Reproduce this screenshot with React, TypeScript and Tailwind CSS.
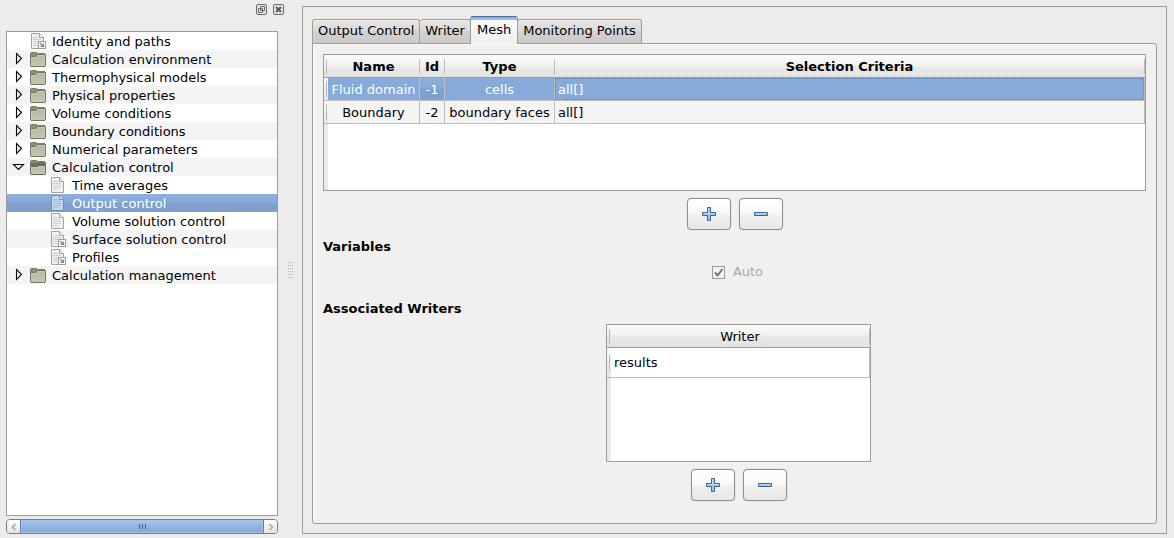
import { useState } from "react";

type IconKind = "page" | "link" | "folder" | "open";

interface Row {
  label: string;
  icon: IconKind;
  child?: boolean;
}

const rows: Row[] = [
  { label: "Identity and paths", icon: "link" },
  { label: "Calculation environment", icon: "folder" },
  { label: "Thermophysical models", icon: "folder" },
  { label: "Physical properties", icon: "folder" },
  { label: "Volume conditions", icon: "folder" },
  { label: "Boundary conditions", icon: "folder" },
  { label: "Numerical parameters", icon: "folder" },
  { label: "Calculation control", icon: "open" },
  { label: "Time averages", icon: "page", child: true },
  { label: "Output control", icon: "page", child: true },
  { label: "Volume solution control", icon: "page", child: true },
  { label: "Surface solution control", icon: "link", child: true },
  { label: "Profiles", icon: "link", child: true },
  { label: "Calculation management", icon: "folder" },
];

function FolderIcon({ open }: { open: boolean }) {
  return (
    <svg width="16" height="16" viewBox="0 0 16 16" className="shrink-0" aria-hidden="true">
      <defs>
        <linearGradient id="folderFill" x1="0" y1="0" x2="0" y2="1">
          <stop offset="0" stopColor="#b4b6a0" />
          <stop offset="1" stopColor="#c6c8b4" />
        </linearGradient>
      </defs>
      <path d="M.5 5V2L1.5 1.5H6.5L7.5 2.5H14.5L15.5 3.5V14.5H.5Z" fill="#8b8d78" stroke="#7b7d6b" />
      {open ? (
        <>
          <path d="M1 4H7L8 3H15V7H1Z" fill="#6d6f5e" />
          <path d="M.5 8.5L1.5 7.5H7.5L8.5 6.5H15.5V14.5L15 15.5H1L.5 14.5Z" fill="url(#folderFill)" stroke="#66685a" />
          <path d="M1.5 14V8.5H8L9 7.5H14.5V14" fill="none" stroke="#c9cbb9" />
        </>
      ) : (
        <>
          <path d="M.5 5.5H5.5L7.5 3.5H15L15.5 4V14.5L15 15.5H1L.5 14.5Z" fill="url(#folderFill)" stroke="#74765f" />
          <path d="M1.5 14V6.5H6L8 4.5H14.5V14" fill="none" stroke="#c9cbb9" />
        </>
      )}
    </svg>
  );
}

function PageIcon({ link, tinted }: { link: boolean; tinted: boolean }) {
  const paper = tinted ? "#c3d6ea" : "#f1f1ef";
  const edge = tinted ? "#6f8fb5" : "#a3a3a0";
  const ink = tinted ? "#a3bbd6" : "#d0d0ce";
  return (
    <svg width="16" height="16" viewBox="0 0 16 16" className="shrink-0" aria-hidden="true">
      <path d="M1.5.5H9.5L13.5 4.5V15.5H1.5Z" fill={paper} stroke={edge} />
      <path d="M9.5.5V4.5H13.5" fill="#ffffff" fillOpacity=".6" stroke={edge} />
      <path d="M3 4.5H8M3 6.5H11M3 8.5H11M3 10.5H11M3 12.5H8" stroke={ink} />
      {link && (
        <>
          <rect x="8.5" y="8.5" width="7" height="7" fill="#fafafa" stroke="#9b9b99" />
          <path d="M10 10L13 13" stroke="#85858a" strokeWidth="1.3" />
          <path d="M14 10V14H10Z" fill="#85858a" />
        </>
      )}
    </svg>
  );
}

function PlusMinus({ plus }: { plus: boolean }) {
  return (
    <svg width="16" height="16" viewBox="0 0 16 16" aria-hidden="true">
      <path
        d={plus ? "M6.5 1.5H9.5V6.5H14.5V9.5H9.5V14.5H6.5V9.5H1.5V6.5H6.5Z" : "M1.5 6.5H14.5V9.5H1.5Z"}
        fill="#a4c0e4"
        stroke="#3465a4"
      />
      <path d={plus ? "M7.5 2.5V7.5H2.5M8.5 7.5H13.5" : "M2.5 7.5H13.5"} fill="none" stroke="#c6d8ee" />
    </svg>
  );
}

function AddRemove({ subject }: { subject: string }) {
  const style =
    "flex h-8 w-11 items-center justify-center rounded border border-[#8e8d8b] bg-[linear-gradient(#ffffff,#f8f8f7_50%,#f1f1f0_50%,#e8e7e6)] shadow-[0_0_1px_#b5b4b2]";
  return (
    <div className="flex justify-center gap-2 pl-[2px]">
      <button type="button" aria-label={"Add " + subject} className={style}>
        <PlusMinus plus />
      </button>
      <button type="button" aria-label={"Remove " + subject} className={style}>
        <PlusMinus plus={false} />
      </button>
    </div>
  );
}

function Expander({ open, label }: { open: boolean; label: string }) {
  return (
    <button type="button" aria-label={"Toggle " + label} className="flex h-[18px] w-[23px] items-center justify-center">
      <svg width="13" height="14" viewBox="0 0 13 14" aria-hidden="true">
        <path d={open ? "M1.5 4.5H11.5L6.5 9.5Z" : "M4.5 1.5V11.5L9.5 6.5Z"} fill="#fff" stroke="#000" strokeWidth="1.1" />
      </svg>
    </button>
  );
}

function Tree() {
  const [selected, setSelected] = useState("Output control");
  return (
    <ul className="grow border border-[#9d9c9a] bg-white">
      {rows.map((row, i) => {
        const active = row.label === selected;
        const back = active
          ? "bg-[linear-gradient(#8db1df,#86a9d8_50%,#7f9fce_50%,#7fa1d0)] text-white"
          : i % 2
            ? "bg-[#f4f4f4]"
            : "";
        const folder = row.icon === "folder" || row.icon === "open";
        return (
          <li key={row.label} className={"flex h-[18px] items-center " + back}>
            {folder ? (
              <Expander open={row.icon === "open"} label={row.label} />
            ) : (
              <span className={row.child ? "w-[43px]" : "w-[23px]"} />
            )}
            <button
              type="button"
              onClick={() => setSelected(row.label)}
              className="flex h-[18px] grow items-center gap-[6px] whitespace-nowrap text-left"
            >
              {folder ? (
                <FolderIcon open={row.icon === "open"} />
              ) : (
                <PageIcon link={row.icon === "link"} tinted={active} />
              )}
              <span className="pt-[2px]">{row.label}</span>
            </button>
          </li>
        );
      })}
    </ul>
  );
}

function ScrollBar() {
  const end = "flex w-[13px] items-center justify-center bg-[linear-gradient(#ffffff,#e4e3e2)]";
  return (
    <div className="mt-[3px] flex h-[15px] overflow-hidden rounded border border-[#7d7c7a]">
      <button type="button" aria-label="Scroll left" className={end}>
        <svg width="6" height="8" viewBox="0 0 6 8" aria-hidden="true">
          <path d="M4.5 1L1.5 4L4.5 7" fill="none" stroke="#a5a4a2" strokeWidth="1.5" />
        </svg>
      </button>
      <div className="flex grow items-center justify-center gap-[2px] border-x border-[#5f7fae] bg-[linear-gradient(#a9c7ee,#92b4e0_50%,#84a8d8)] shadow-[inset_0_0_0_1px_#a5c1e6]">
        <span className="h-[5px] w-px bg-[#3b5f96]" />
        <span className="h-[5px] w-px bg-[#3b5f96]" />
        <span className="h-[5px] w-px bg-[#3b5f96]" />
      </div>
      <button type="button" aria-label="Scroll right" className={end}>
        <svg width="6" height="8" viewBox="0 0 6 8" aria-hidden="true">
          <path d="M1.5 1L4.5 4L1.5 7" fill="none" stroke="#a5a4a2" strokeWidth="1.5" />
        </svg>
      </button>
    </div>
  );
}

function HeadCell({ text }: { text: string }) {
  return (
    <th scope="col" className="border-b border-[#9d9c9a] p-0">
      <div className="flex h-[22px] items-center">
        <span className="grow pt-[2px] text-center">{text}</span>
        <span className="h-[15px] w-px bg-[#bdbcba]" />
      </div>
    </th>
  );
}

function SideCell() {
  return (
    <th className="border-b border-[#bdbcba] bg-[linear-gradient(#fbfbfb,#efeeed_50%,#e6e5e4)] p-0">
      <div className="ml-[2px] h-4 w-px bg-[#bdbcba]" />
    </th>
  );
}

function CornerCell() {
  return (
    <td className="border-b border-[#9d9c9a] p-0">
      <div className="ml-[2px] h-[15px] w-px bg-[#bdbcba]" />
    </td>
  );
}

const headRow = "bg-[linear-gradient(#fbfbfa,#f0efee_50%,#eae9e8_50%,#e3e2e1)]";

function MeshTable() {
  const cell = "h-[23px] border-r border-b border-[#bdbcba] p-0 pt-[2px] text-center whitespace-nowrap";
  return (
    <div className="flex min-h-[137px] flex-col border border-[#9d9c9a] bg-white">
      <table className="w-full table-fixed border-separate border-spacing-0">
        <colgroup>
          <col className="w-1" />
          <col className="w-[92px]" />
          <col className="w-[25px]" />
          <col className="w-[110px]" />
          <col />
        </colgroup>
        <thead className={headRow}>
          <tr>
            <CornerCell />
            <HeadCell text="Name" />
            <HeadCell text="Id" />
            <HeadCell text="Type" />
            <HeadCell text="Selection Criteria" />
          </tr>
        </thead>
        <tbody>
          <tr className="bg-[#86aad9] text-white">
            <SideCell />
            <td className={cell}>Fluid domain</td>
            <td className={cell + " bg-[linear-gradient(#8db1df,#86a9d8_50%,#7f9fce_50%,#7fa1d0)]"}>-1</td>
            <td className={cell}>cells</td>
            <td className="border-r border-b border-[#bdbcba] p-0">
              <div className="flex h-[22px] items-center border border-dotted border-[#6f7f95] pt-[2px] pl-[2px]">all[]</div>
            </td>
          </tr>
          <tr className="bg-[#f4f4f4]">
            <SideCell />
            <td className={cell}>Boundary</td>
            <td className={cell}>-2</td>
            <td className={cell}>boundary faces</td>
            <td className="border-r border-b border-[#bdbcba] p-0 pt-[2px] pl-[3px]">all[]</td>
          </tr>
        </tbody>
      </table>
      <div className="w-1 grow bg-[#ebeae9]" />
    </div>
  );
}

function WriterTable() {
  return (
    <div className="mx-auto flex min-h-[138px] w-[265px] flex-col border border-[#9d9c9a] bg-white">
      <table className="w-full table-fixed border-separate border-spacing-0">
        <colgroup>
          <col className="w-1" />
          <col />
        </colgroup>
        <thead className={headRow + " [&_th]:font-normal"}>
          <tr>
            <CornerCell />
            <HeadCell text="Writer" />
          </tr>
        </thead>
        <tbody>
          <tr>
            <SideCell />
            <td className="h-[30px] border-r border-b border-[#bdbcba] p-0 pl-[3px]">results</td>
          </tr>
        </tbody>
      </table>
      <div className="w-1 grow bg-[#ebeae9]" />
    </div>
  );
}

function Tab({ text }: { text: string }) {
  return (
    <button
      type="button"
      role="tab"
      aria-selected="false"
      className="h-6 rounded-t-[3px] border border-b-0 border-[#9d9c9a] bg-[linear-gradient(#e6e5e3,#dbdad8_50%,#d3d2d0_50%,#cbcac8)] px-[5px] pb-[2px] shadow-[inset_0_1px_0_#f3f3f2] not-first:border-l-0"
    >
      {text}
    </button>
  );
}

export default function App() {
  return (
    <div className="flex min-h-screen bg-[#edeceb] font-['DejaVu_Sans',sans-serif] text-[13px] leading-[18px] text-black">
      <aside className="flex w-[284px] shrink-0 flex-col pb-1 pl-[6px]">
        <div className="flex h-[31px] gap-[6px] self-end pt-1">
          <button type="button" aria-label="Float panel" className="h-[11px]">
            <svg width="11" height="11" viewBox="0 0 11 11" aria-hidden="true">
              <rect x=".5" y=".5" width="10" height="10" rx="1.5" fill="#e6e5e3" stroke="#6b6a68" />
              <path d="M4.5 2.5H8.5V6.5H4.5ZM2.5 4.5H6.5V8.5H2.5Z" fill="none" stroke="#6b6a68" />
            </svg>
          </button>
          <button type="button" aria-label="Close panel" className="h-[11px]">
            <svg width="11" height="11" viewBox="0 0 11 11" aria-hidden="true">
              <rect x=".5" y=".5" width="10" height="10" rx="1.5" fill="#e6e5e3" stroke="#6b6a68" />
              <path d="M3 3L8 8M8 3L3 8" stroke="#5a5957" strokeWidth="2" />
            </svg>
          </button>
        </div>
        <div className="mr-[6px] flex grow flex-col">
          <Tree />
          <ScrollBar />
        </div>
      </aside>

      <div className="flex w-[18px] shrink-0 items-center pt-[3px] pl-1">
        <svg width="5" height="18" viewBox="0 0 5 18" aria-hidden="true">
          <path d="M.5 0V18M2.5 0V18M4.5 0V18" stroke="#b4b3b1" strokeDasharray="1 2" />
        </svg>
      </div>

      <main className="mt-[6px] mr-[7px] mb-1 flex min-w-0 grow flex-col border border-[#9d9c9a] p-[9px]">
        <div role="tablist" className="z-10 -mb-px flex items-end">
          <div className="flex pb-px">
            <Tab text="Output Control" />
            <Tab text="Writer" />
          </div>
          <button
            type="button"
            role="tab"
            aria-selected="true"
            className="-ml-px h-7 rounded-t-[3px] border border-b-0 border-[#9d9c9a] border-t-[#4a6f9f] bg-[linear-gradient(#86aad9_0px,#a9c6ec_3px,#fafafa_3px,#f1f0ee)] px-[6px] pb-[2px]"
          >
            Mesh
          </button>
          <div className="-ml-px flex pb-px">
            <Tab text="Monitoring Points" />
          </div>
        </div>

        <section className="flex grow flex-col rounded-tr-[3px] rounded-b-[3px] border border-[#9d9c9a] bg-[#f1f0ee] p-[10px] shadow-[inset_1px_1px_0_#fbfbfa]">
          <MeshTable />
          <div className="mt-[7px]">
            <AddRemove subject="mesh" />
          </div>

          <h2 className="mt-2 font-bold">Variables</h2>
          <label className="mt-[7px] flex items-center justify-center gap-2 pl-[6px] text-[#a9a8a6]">
            <span className="relative flex">
              <input
                type="checkbox"
                defaultChecked
                disabled
                className="size-[13px] appearance-none border border-[#9d9c9a] bg-[#f4f3f2]"
              />
              <svg width="13" height="13" viewBox="0 0 13 13" className="absolute inset-0" aria-hidden="true">
                <path d="M3 6.5L5.5 9.5L10.5 3" fill="none" stroke="#73726f" strokeWidth="2" />
              </svg>
            </span>
            Auto
          </label>

          <h2 className="mt-[19px] font-bold">Associated Writers</h2>
          <div className="mt-[6px] flex flex-col gap-[7px] pl-2">
            <WriterTable />
            <AddRemove subject="writer" />
          </div>
        </section>
      </main>
    </div>
  );
}
